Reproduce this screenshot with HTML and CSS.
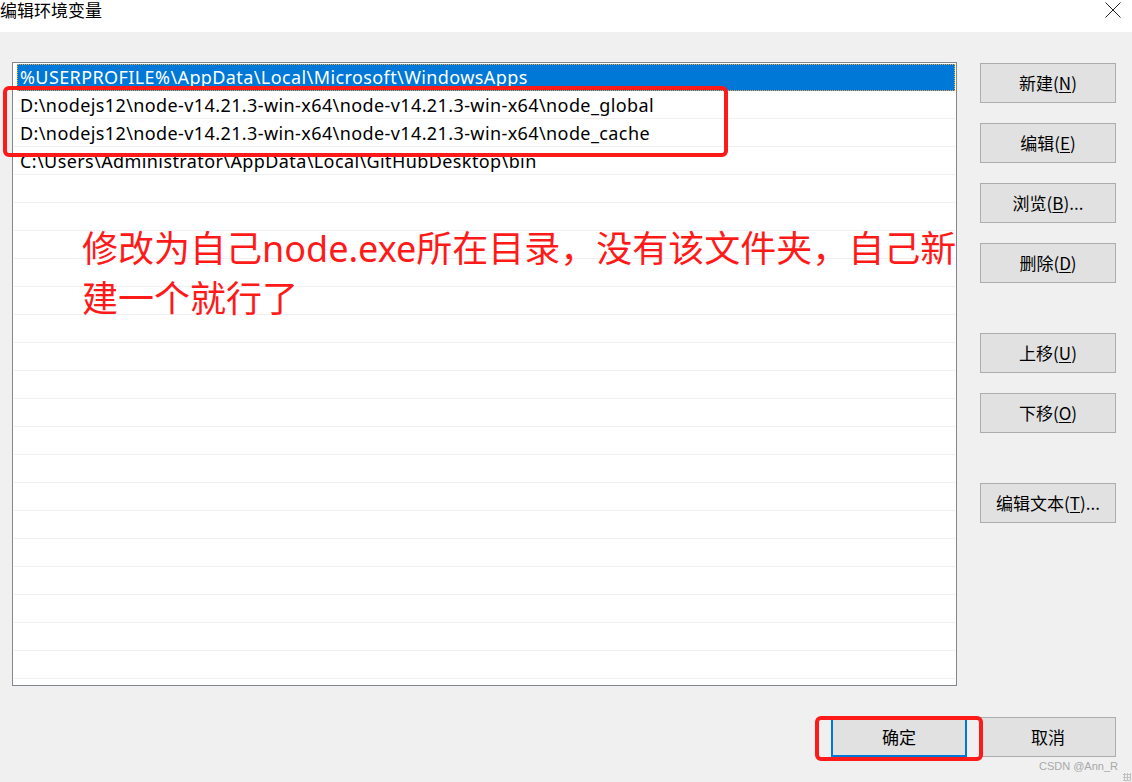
FILE: index.html
```html
<!DOCTYPE html>
<html lang="zh-CN">
<head>
<meta charset="utf-8">
<title>编辑环境变量</title>
<link rel="stylesheet" href="styles.css">
</head>
<body>
<div class="window">
  <header class="titlebar">
    <span class="title">编辑环境变量</span>
    <svg class="close" width="16" height="16" viewBox="0 0 16 16"><path d="M0.5 0.5 L15.5 15.5 M15.5 0.5 L0.5 15.5" stroke="#222" stroke-width="1" fill="none"/></svg>
  </header>
  <main class="content">
    <div class="top">
      <div class="listbox">
        <div class="row selected"><span>%USERPROFILE%\AppData\Local\Microsoft\WindowsApps</span></div>
        <div class="row"><span>D:\nodejs12\node-v14.21.3-win-x64\node-v14.21.3-win-x64\node_global</span></div>
        <div class="row"><span>D:\nodejs12\node-v14.21.3-win-x64\node-v14.21.3-win-x64\node_cache</span></div>
        <div class="row"><span>C:\Users\Administrator\AppData\Local\GitHubDesktop\bin</span></div>
        <div class="row"></div><div class="row"></div><div class="row"></div><div class="row"></div>
        <div class="row"></div><div class="row"></div><div class="row"></div><div class="row"></div>
        <div class="row"></div><div class="row"></div><div class="row"></div><div class="row"></div>
        <div class="row"></div><div class="row"></div><div class="row"></div><div class="row"></div>
        <div class="row"></div><div class="row"></div>
        <div class="note">修改为自己node.exe所在目录，没有该文件夹，自己新<br>建一个就行了</div>
      </div>
      <div class="side">
        <div class="group">
          <button class="btn">新建(<u>N</u>)</button>
          <button class="btn">编辑(<u>E</u>)</button>
          <button class="btn">浏览(<u>B</u>)...</button>
          <button class="btn">删除(<u>D</u>)</button>
        </div>
        <div class="group">
          <button class="btn">上移(<u>U</u>)</button>
          <button class="btn">下移(<u>O</u>)</button>
        </div>
        <div class="group">
          <button class="btn">编辑文本(<u>T</u>)...</button>
        </div>
      </div>
    </div>
    <div class="bottom">
      <button class="btn primary">确定</button>
      <button class="btn">取消</button>
    </div>
  </main>
  <div class="mark mark-list"></div>
  <div class="mark mark-ok"></div>
  <div class="watermark">CSDN @Ann_R</div>
  <div class="grip"></div>
</div>
</body>
</html>
```
FILE: styles.css
```css
html, body {
  margin: 0;
  padding: 0;
}
body {
  width: 1132px;
  height: 782px;
  overflow: hidden;
  font-family: "Noto Sans", "Noto Sans CJK SC", sans-serif;
  color: #000;
  background: #f0f0f0;
}
.window {
  position: relative;
  width: 1132px;
  height: 782px;
  display: flex;
  flex-direction: column;
}
.titlebar {
  height: 32px;
  background: #fff;
  display: flex;
  align-items: flex-start;
  justify-content: space-between;
  flex-shrink: 0;
}
.title {
  font-family: "Noto Sans CJK SC", sans-serif;
  font-size: 17px;
  line-height: 20px;
  margin-left: 0;
  margin-top: 0;
}
.close {
  margin-top: 2px;
  margin-right: 11px;
}
.content {
  flex: 1;
  background: #f0f0f0;
  display: flex;
  flex-direction: column;
}
.top {
  display: flex;
  padding-top: 30px;
  padding-left: 12px;
}
.listbox {
  position: relative;
  width: 945px;
  height: 624px;
  box-sizing: border-box;
  border: 1px solid #828790;
  background: #fff;
  overflow: hidden;
}
.row {
  height: 28px;
  box-sizing: border-box;
  margin-left: 1px;
  margin-right: 1px;
  border-bottom: 1px solid #f0f0f0;
  padding-left: 6px;
  font-size: 18px;
  letter-spacing: 0.4px;
  line-height: 28px;
  white-space: nowrap;
}
.row.selected {
  margin-left: 4px;
  padding-left: 3px;
  margin-top: 1px;
  height: 27px;
  line-height: 27px;
  background: #0078d7;
  color: #fff;
  border-bottom: none;
  outline: 1px dotted #f2a33a;
  outline-offset: -1px;
}
.note {
  position: absolute;
  left: 69px;
  top: 161px;
  font-family: "Noto Sans", "Noto Sans CJK SC", sans-serif;
  font-size: 36px;
  line-height: 50px;
  color: #ff1a1a;
  white-space: nowrap;
}
.side {
  margin-left: 23px;
  padding-top: 1px;
  display: flex;
  flex-direction: column;
  gap: 50px;
}
.group {
  display: flex;
  flex-direction: column;
  gap: 20px;
}
.btn {
  width: 136px;
  height: 40px;
  box-sizing: border-box;
  background: #e1e1e1;
  border: 1px solid #adadad;
  font-family: "Noto Sans CJK SC", sans-serif;
  font-size: 17px;
  color: #000;
  padding: 0;
  margin: 0;
  line-height: 20px;
}
.btn u {
  text-underline-offset: 2px;
}
.bottom {
  display: flex;
  justify-content: flex-end;
  gap: 13px;
  padding-right: 16px;
  margin-top: 31px;
}
.btn.primary {
  border: 2px solid #0078d7;
}
.mark {
  position: absolute;
  border: 4px solid #ff1a1a;
  border-radius: 6px;
  box-sizing: border-box;
}
.mark-list {
  left: 3px;
  top: 86px;
  width: 725px;
  height: 71px;
}
.mark-ok {
  left: 815px;
  top: 716px;
  width: 168px;
  height: 45px;
}
.watermark {
  position: absolute;
  right: 14px;
  top: 760px;
  font-family: "Liberation Sans", sans-serif;
  font-size: 11px;
  color: #a8a8a8;
}
.grip {
  position: absolute;
  right: 1px;
  bottom: 1px;
  width: 8px;
  height: 8px;
  background-image: radial-gradient(circle, #c0c0c0 1px, transparent 1.2px);
  background-size: 3px 3px;
}
```
